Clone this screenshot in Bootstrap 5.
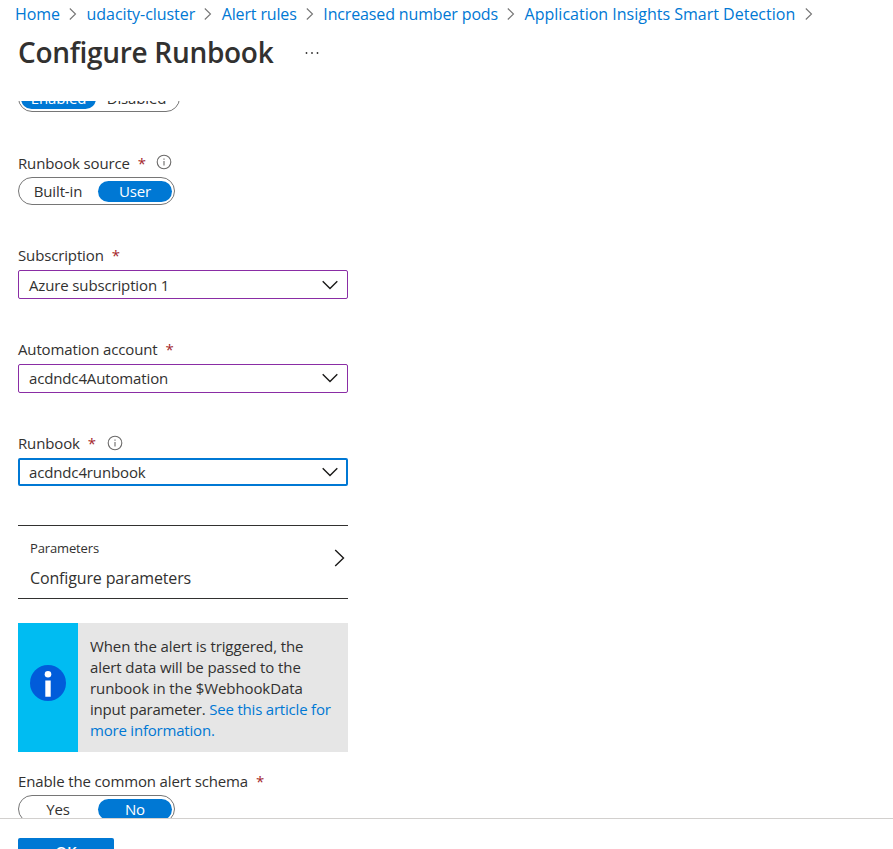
<!DOCTYPE html>
<html lang="en">
<head>
<meta charset="utf-8">
<meta name="viewport" content="width=device-width, initial-scale=1">
<title>Configure Runbook</title>
<link href="https://cdn.jsdelivr.net/npm/bootstrap@5.3.0/dist/css/bootstrap.min.css" rel="stylesheet">
<style>
  body { font-family: "Open Sans", "Noto Sans", sans-serif; font-size: 15px; letter-spacing: -.14px; line-height: 20px; color: #323130; background: #fff; height: 849px; }
  a { color: #0078d4; }
  svg { display: block; flex: none; }
  .page-head { height: 101px; }
  .crumbs { padding: 4px 0 0 15px; font-size: 16px; letter-spacing: -.06px; gap: 9.3px; }
  .crumbs .tight { letter-spacing: -.14px; }
  .crumbs .loose { letter-spacing: 0; }
  .page-title { font-size: 28px; line-height: 36px; font-weight: 600; letter-spacing: -.3px; margin: 0; }
  .title-row { padding: 10px 0 0 18px; gap: 32px; }
  .title-row svg { margin-top: 2px; }
  .form-area { height: 717px; }
  .form-col { width: 330px; margin: -17px 0 0 18px; }
  .field-label { height: 24px; gap: 8px; }
  .field-label.raised { margin-top: -1px; height: 25px; }
  .req { color: #a4262c; }
  .info-mark { margin-left: 2px; margin-top: 1px; }
  .raised .info-mark { margin-left: 3px; margin-top: 2px; }
  .switch { width: 157px; height: 28px; border: 1px solid #767676; padding: 1px 2px 0 2px; }
  .switch.wide { width: 162px; }
  .switch span { width: 74px; height: 21px; line-height: 21px; }
  .switch .on { background: #0078d4; color: #fff; }
  .switch .on:last-child { margin-left: 3px; }
  .switch .on:first-child { width: 75px; }
  .picker { height: 29px; border: 1px solid #8a2da5; border-radius: 2px; padding: 0 9px 0 10px; }
  .picker.high { padding-bottom: 2px; }
  .picker.focused { height: 28px; border: 2px solid #0078d4; padding: 0 8px 0 9px; }
  .gap-field { margin-bottom: 41px; }
  .params { height: 74px; border: solid #323130; border-width: 1px 0; padding: 12px 3px 0 12px; margin-top: 39px; }
  .params-name { font-size: 13px; }
  .params-value { font-size: 16px; margin-top: 10px; }
  .params svg { margin-top: 11px; }
  .note-box { height: 129px; background: #e6e6e6; margin: 24px 0 19px; }
  .note-icon { width: 60px; background: #00bcf2; padding-bottom: 9px; }
  .note-text { padding: 13px 0 0 12px; line-height: 21px; letter-spacing: -.1px; }
  .note-text .tail { letter-spacing: -.2px; }
  .page-foot { height: 31px; border-top: 1px solid #d2d0ce; padding: 19px 0 0 18px; }
  .ok-btn { display: block; width: 96px; height: 30px; border-radius: 2px; background: #0078d4; color: #fff; border: 0; padding: 0 0 3px; font-weight: 600; line-height: 25px; font-size: 15px; }
</style>
<script src="https://cdn.jsdelivr.net/npm/bootstrap@5.3.0/dist/js/bootstrap.bundle.min.js"></script>
</head>
<body class="overflow-hidden">
<svg class="d-none">
  <symbol id="crumb-sep" viewBox="0 0 8 12"><path d="M.8.500 6.500 6 .8 11.500" fill="none" stroke="#767676" stroke-width="1.1"/></symbol>
  <symbol id="chev-down" viewBox="0 0 16 10"><path d="M.7 1.200 8 8.500l7.300-7.300" fill="none" stroke="#1b1a19" stroke-width="1.4"/></symbol>
  <symbol id="info-ring" viewBox="0 0 16 16"><circle cx="8" cy="8" r="6.800" fill="none" stroke="#6b6a69" stroke-width="1.100"/><path d="M8 7v4.500M8 4.400v1.300" stroke="#6b6a69" stroke-width="1.100"/></symbol>
</svg>

<header class="page-head">
  <nav class="crumbs d-flex align-items-center text-nowrap" aria-label="Breadcrumb">
    <a class="text-decoration-none" href="#">Home</a><svg width="8" height="12"><use href="#crumb-sep"/></svg>
    <a class="text-decoration-none" href="#">udacity-cluster</a><svg width="8" height="12"><use href="#crumb-sep"/></svg>
    <a class="text-decoration-none tight" href="#">Alert rules</a><svg width="8" height="12"><use href="#crumb-sep"/></svg>
    <a class="text-decoration-none tight" href="#">Increased number pods</a><svg width="8" height="12"><use href="#crumb-sep"/></svg>
    <a class="text-decoration-none loose" href="#">Application Insights Smart Detection</a><svg width="8" height="12"><use href="#crumb-sep"/></svg>
  </nav>
  <div class="title-row d-flex align-items-center">
    <h1 class="page-title">Configure Runbook</h1>
    <svg width="14" height="4" viewBox="0 0 14 4" fill="#323130"><circle cx="1.500" cy="2" r=".9"/><circle cx="7" cy="2" r=".9"/><circle cx="12.500" cy="2" r=".9"/></svg>
  </div>
</header>

<main class="form-area overflow-hidden">
  <div class="form-col d-flex flex-column">
    <div class="switch wide rounded-pill d-flex align-items-center text-center gap-field">
      <span class="on rounded-pill">Enabled</span><span class="flex-fill">Disabled</span>
    </div>

    <div class="field-label d-flex">Runbook source <span class="req">*</span>
      <svg class="info-mark" width="16" height="16"><use href="#info-ring"/></svg></div>
    <div class="switch rounded-pill d-flex align-items-center text-center gap-field">
      <span>Built-in</span><span class="on rounded-pill">User</span>
    </div>

    <div class="field-label raised d-flex">Subscription <span class="req">*</span></div>
    <div class="picker d-flex align-items-center justify-content-between gap-field">Azure subscription 1
      <svg width="16" height="10"><use href="#chev-down"/></svg></div>

    <div class="field-label raised d-flex">Automation account <span class="req">*</span></div>
    <div class="picker high d-flex align-items-center justify-content-between gap-field">acdndc4Automation
      <svg width="16" height="10"><use href="#chev-down"/></svg></div>

    <div class="field-label raised d-flex">Runbook <span class="req">*</span>
      <svg class="info-mark" width="16" height="16"><use href="#info-ring"/></svg></div>
    <div class="picker focused d-flex align-items-center justify-content-between">acdndc4runbook
      <svg width="16" height="10"><use href="#chev-down"/></svg></div>

    <div class="params d-flex justify-content-between">
      <div>
        <div class="params-name">Parameters</div>
        <div class="params-value">Configure parameters</div>
      </div>
      <svg width="11" height="18" viewBox="0 0 11 18"><path d="M1.200 1 9.500 9l-8.300 8" fill="none" stroke="#1b1a19" stroke-width="1.400"/></svg>
    </div>

    <div class="note-box d-flex">
      <div class="note-icon flex-shrink-0 d-flex align-items-center justify-content-center">
        <svg width="36" height="36" viewBox="0 0 36 36"><circle cx="18" cy="18" r="18" fill="#015cda"/><circle cx="18" cy="9.300" r="3.300" fill="#fff"/><path d="M15.300 15.500h5.400v16.300h-5.400z" fill="#fff"/></svg>
      </div>
      <div class="note-text text-nowrap">When the alert is triggered, the<br>alert data will be passed to the<br>runbook in the $WebhookData<br><span class="tail">input parameter. <a class="text-decoration-none" href="#">See this article for<br>more information.</a></span></div>
    </div>

    <div class="field-label d-flex">Enable the common alert schema <span class="req">*</span></div>
    <div class="switch rounded-pill d-flex align-items-center text-center">
      <span>Yes</span><span class="on rounded-pill">No</span>
    </div>
  </div>
</main>

<footer class="page-foot overflow-hidden">
  <button class="ok-btn" type="button">OK</button>
</footer>
</body>
</html>
